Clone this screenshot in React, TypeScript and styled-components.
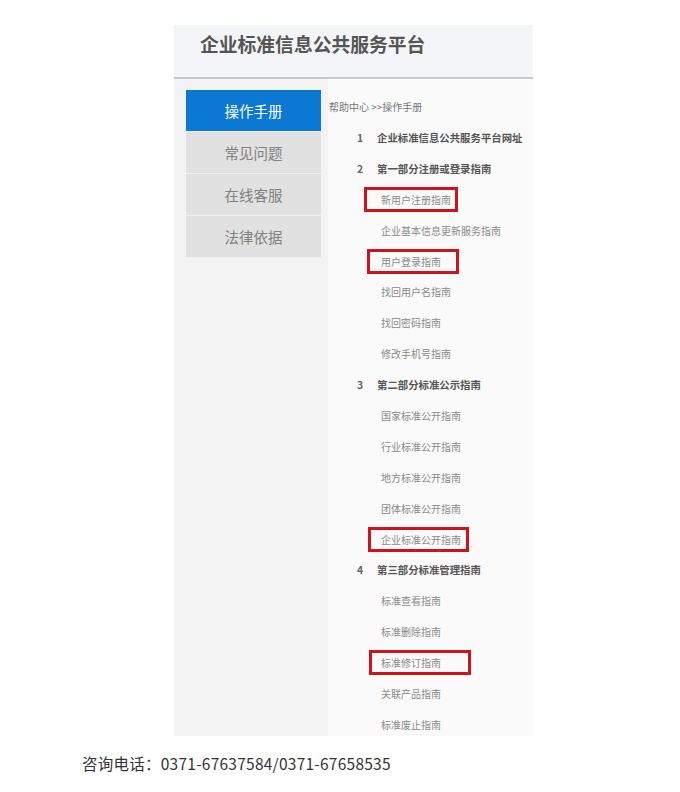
import { createGlobalStyle, styled } from 'styled-components';

const GlobalStyle = createGlobalStyle`
    html, body {
        margin: 0;
        padding: 0;
        background: #fff;
        font-family: "Noto Sans CJK SC", "Noto Sans", sans-serif;
    }
`;

const Page = styled.div`
    width: 680px;
    height: 792px;
    padding-top: 25px;
    box-sizing: border-box;
`;

const Shot = styled.div`
    margin-left: 174px;
    width: 359px;
    height: 711px;
    overflow: hidden;
    display: flex;
    flex-direction: column;
`;

const Header = styled.div`
    height: 52px;
    flex-shrink: 0;
    background: #f3f5f8;
    border-bottom: 2px solid #c7cacf;
    padding: 6px 0 0 26px;
    box-sizing: border-box;
    height: 54px;
`;

const Title = styled.h1`
    margin: 0;
    font-size: 18.8px;
    line-height: 26px;
    font-weight: 700;
    color: #555;
`;

const Body = styled.div`
    flex: 1;
    display: flex;
    min-height: 0;
`;

const Side = styled.div`
    width: 154px;
    flex-shrink: 0;
    background: #f3f3f3;
    padding: 11px 0 0 12px;
    box-sizing: border-box;
`;

const Menu = styled.ul`
    list-style: none;
    margin: 0;
    padding: 0;
    width: 135px;
`;

const MenuItem = styled.li<{ $active?: boolean }>`
    height: 41px;
    border-bottom: 1px solid #f0f0f0;
    display: flex;
    align-items: center;
    justify-content: center;
    font-size: 14.5px;
    color: ${(p) => (p.$active ? '#fff' : '#808080')};
    background: ${(p) => (p.$active ? '#0b78d4' : '#e1e1e1')};
`;

const Content = styled.div`
    flex: 1;
    background: #fafafa;
    padding-top: 12px;
`;

const Crumb = styled.div`
    height: 31px;
    line-height: 31px;
    font-size: 10px;
    color: #777;
    padding-left: 1px;
`;

const Row = styled.div<{ $sub?: boolean }>`
    height: 30.9px;
    display: flex;
    align-items: center;
    font-size: ${(p) => (p.$sub ? '10px' : '10.4px')};
    font-weight: ${(p) => (p.$sub ? 400 : 700)};
    color: ${(p) => (p.$sub ? '#8a8a8a' : '#555')};
    padding-left: ${(p) => (p.$sub ? '53px' : '29px')};
    white-space: nowrap;
`;

const Num = styled.span`
    width: 20px;
    font-weight: 700;
    color: #666;
`;

const Mark = styled.span<{ $l: number; $r: number }>`
    display: inline-block;
    border: 3px solid #d0121b;
    height: 19px;
    line-height: 19px;
    padding: 0 ${(p) => p.$r}px 0 ${(p) => p.$l}px;
    margin-left: ${(p) => -(p.$l + 3)}px;
`;

const Footer = styled.div`
    margin: 17px 0 0 82px;
    font-size: 15.5px;
    letter-spacing: 0.25px;
    color: #333;
    line-height: 20px;
`;

type Item =
    | { kind: 'head'; num: string; text: string }
    | { kind: 'sub'; text: string; mark?: [number, number] };

const items: Item[] = [
    { kind: 'head', num: '1', text: '企业标准信息公共服务平台网址' },
    { kind: 'head', num: '2', text: '第一部分注册或登录指南' },
    { kind: 'sub', text: '新用户注册指南', mark: [14, 4] },
    { kind: 'sub', text: '企业基本信息更新服务指南' },
    { kind: 'sub', text: '用户登录指南', mark: [11, 15] },
    { kind: 'sub', text: '找回用户名指南' },
    { kind: 'sub', text: '找回密码指南' },
    { kind: 'sub', text: '修改手机号指南' },
    { kind: 'head', num: '3', text: '第二部分标准公示指南' },
    { kind: 'sub', text: '国家标准公开指南' },
    { kind: 'sub', text: '行业标准公开指南' },
    { kind: 'sub', text: '地方标准公开指南' },
    { kind: 'sub', text: '团体标准公开指南' },
    { kind: 'sub', text: '企业标准公开指南', mark: [10, 5] },
    { kind: 'head', num: '4', text: '第三部分标准管理指南' },
    { kind: 'sub', text: '标准查看指南' },
    { kind: 'sub', text: '标准删除指南' },
    { kind: 'sub', text: '标准修订指南', mark: [9, 27] },
    { kind: 'sub', text: '关联产品指南' },
    { kind: 'sub', text: '标准废止指南' },
];

const menu = ['操作手册', '常见问题', '在线客服', '法律依据'];

export default function App() {
    return (
        <>
            <GlobalStyle />
            <Page>
                <Shot>
                    <Header>
                        <Title>企业标准信息公共服务平台</Title>
                    </Header>
                    <Body>
                        <Side>
                            <Menu>
                                {menu.map((m, i) => (
                                    <MenuItem key={m} $active={i === 0}>{m}</MenuItem>
                                ))}
                            </Menu>
                        </Side>
                        <Content>
                            <Crumb>帮助中心 &gt;&gt;操作手册</Crumb>
                            {items.map((it) =>
                                it.kind === 'head' ? (
                                    <Row key={it.text}>
                                        <Num>{it.num}</Num>
                                        {it.text}
                                    </Row>
                                ) : (
                                    <Row key={it.text} $sub>
                                        {it.mark ? (
                                            <Mark $l={it.mark[0]} $r={it.mark[1]}>{it.text}</Mark>
                                        ) : (
                                            it.text
                                        )}
                                    </Row>
                                )
                            )}
                        </Content>
                    </Body>
                </Shot>
                <Footer>咨询电话：0371-67637584/0371-67658535</Footer>
            </Page>
        </>
    );
}
